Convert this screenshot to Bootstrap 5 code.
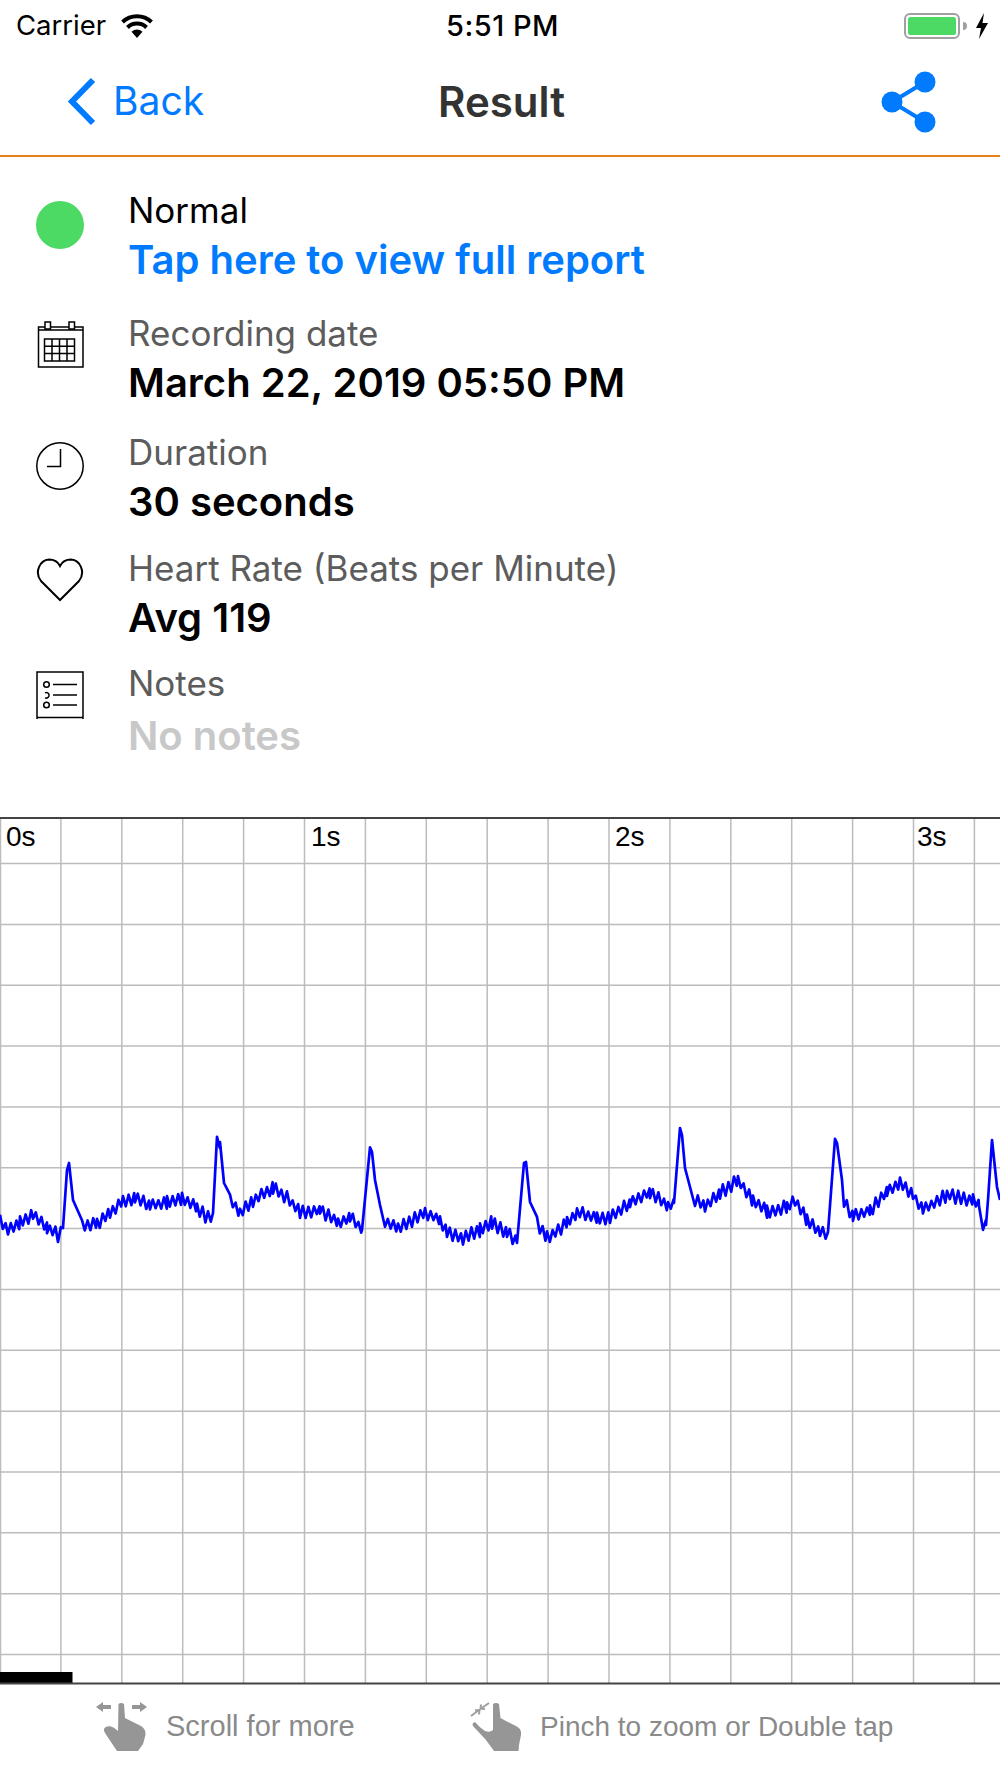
<!DOCTYPE html>
<html lang="en">
<head>
    <meta charset="UTF-8">
    <meta name="viewport" content="width=device-width, initial-scale=1.0">
    <title>Result</title>
    <link rel="stylesheet" href="https://cdn.jsdelivr.net/npm/bootstrap@5.3.0/dist/css/bootstrap.min.css">
    <style>
        body {
            background: #fff;
            font-family: Inter, "Liberation Sans", sans-serif;
            color: #000;
            width: 1000px;
            height: 1778px;
            overflow: hidden;
        }

        /* Status bar */
        .status-bar {
            height: 47px;
            padding: 4px 11px 0 16px;
            font-size: 27.500px;
            font-weight: 500;
        }
        .status-side { width: 300px; }
        .status-carrier { font-weight: 400; margin-right: 5px; }
        .status-time { font-size: 29px; letter-spacing: 0.500px; }

        /* Navigation */
        .nav-bar {
            height: 110px;
            border-bottom: 2px solid #e8811a;
            padding: 1px 64px 0 67px;
        }
        .nav-side { width: 200px; color: #007aff; font-size: 39px; }
        .nav-title { font-size: 42px; font-weight: 600; color: #333; }

        /* Info rows */
        .info-list { padding-top: 28px; }
        .info-row { display: flex; }
        .info-icon {
            width: 128px;
            padding-left: 36px;
            flex-shrink: 0;
        }
        .info-label, .info-value { line-height: 50px; }
        .info-label { font-size: 35px; color: #5c5c5c; }
        .info-value { font-size: 40px; font-weight: 600; }
        .info-primary { color: #000; }
        .info-link { color: #007aff; text-decoration: none; }
        .info-empty { color: #c8c8c8; margin-top: 3px; }
        .row-a { height: 123px; }
        .row-b { height: 119px; }
        .row-c { height: 116px; }
        .row-d { height: 115px; }
        .row-a .info-icon { padding-top: 16px; }
        .row-b .info-icon { padding-top: 11px; }
        .row-c .info-icon { padding-top: 15px; }
        .row-d .info-icon { padding-top: 15px; }
        .row-e .info-icon { padding-top: 13px; }

        .green-dot {
            width: 48px;
            height: 48px;
            border-radius: 50%;
            background: #4cd964;
        }

        /* Chart */
        .ecg-chart { display: block; margin-top: 56px; }
        .ecg-label { font-family: "Liberation Sans", sans-serif; font-size: 28px; fill: #000; }

        /* Footer hints */
        .hint-bar {
            padding: 17px 0 0 96px;
            font-family: "Liberation Sans", sans-serif;
            font-size: 28px;
            color: #8a8a8a;
        }
        .hint-scroll { width: 374px; gap: 19px; }
        .hint-scroll span { font-size: 29px; }
        .hint-pinch { gap: 18px; }
    </style>
</head>
<body>

<!-- Status bar -->
<div class="status-bar d-flex align-items-center justify-content-between">
    <div class="status-side d-flex align-items-center gap-2">
        <span class="status-carrier">Carrier</span>
        <svg width="36" height="24" viewBox="0 0 36 24">
            <path d="M18 24l-5.500-6.200a8 8 0 0 1 11 0z" fill="#000"/>
            <path d="M8.500 13.500a13.500 13.500 0 0 1 19 0M3.500 8a21 21 0 0 1 29 0" fill="none" stroke="#000" stroke-width="4"/>
        </svg>
    </div>
    <div class="status-time">5:51 PM</div>
    <div class="status-side d-flex justify-content-end align-items-center">
        <svg width="85" height="26" viewBox="0 0 85 26">
            <rect x="1" y="1" width="54" height="24" rx="5" fill="#fff" stroke="#a0a0a0" stroke-width="2"/>
            <rect x="4" y="4" width="48" height="18" rx="2.500" fill="#4cd964"/>
            <path d="M59 9a4 4 0 0 1 0 8z" fill="#a0a0a0"/>
            <path d="M80 0L72 15h5l-2 11 9-16h-5.500z" fill="#000"/>
        </svg>
    </div>
</div>

<!-- Nav bar -->
<div class="nav-bar d-flex align-items-center justify-content-between">
    <div class="nav-side d-flex align-items-center gap-3">
        <svg width="30" height="49" viewBox="0 0 30 49">
            <path d="M26 3L5 24.500 26 46" fill="none" stroke="#007aff" stroke-width="6"/>
        </svg>
        <span>Back</span>
    </div>
    <div class="nav-title">Result</div>
    <div class="nav-side d-flex justify-content-end">
        <svg width="55" height="62" viewBox="0 0 55 62">
            <circle cx="44" cy="11" r="10.500" fill="#007aff"/>
            <circle cx="11" cy="31" r="10.500" fill="#007aff"/>
            <circle cx="44" cy="51" r="10.500" fill="#007aff"/>
            <path d="M44 11L11 31l33 20" fill="none" stroke="#007aff" stroke-width="4"/>
        </svg>
    </div>
</div>

<!-- Details -->
<div class="info-list">
    <div class="info-row row-a">
        <div class="info-icon"><div class="green-dot"></div></div>
        <div>
            <div class="info-label info-primary">Normal</div>
            <a href="#" class="info-value info-link d-block">Tap here to view full report</a>
        </div>
    </div>
    <div class="info-row row-b">
        <div class="info-icon">
            <svg width="48" height="50" viewBox="0 0 48 50" fill="none" stroke="#000" stroke-width="1.500">
                <path d="M2.500 12V48H47V8H2.500zM2.500 11H47"/>
                <rect x="9" y="3" width="5.500" height="7" fill="#fff"/>
                <rect x="33" y="3" width="5.500" height="7" fill="#fff"/>
                <rect x="8.500" y="20" width="30" height="22"/>
                <path d="M8.500 27.300H38.500M8.500 34.600H38.500M16 20V42M23.500 20V42M31 20V42"/>
            </svg>
        </div>
        <div>
            <div class="info-label">Recording date</div>
            <div class="info-value">March 22, 2019 05:50 PM</div>
        </div>
    </div>
    <div class="info-row row-c">
        <div class="info-icon">
            <svg width="48" height="48" viewBox="0 0 48 48" fill="none" stroke="#000" stroke-width="1.500">
                <circle cx="24" cy="24" r="23.200"/>
                <path d="M24.500 7V24.500H11"/>
            </svg>
        </div>
        <div>
            <div class="info-label">Duration</div>
            <div class="info-value">30 seconds</div>
        </div>
    </div>
    <div class="info-row row-d">
        <div class="info-icon">
            <svg width="48" height="44" viewBox="0 0 48 44" fill="none" stroke="#000" stroke-width="2">
                <path d="M24 42L5 23C-2 14 4 2 13 1.500 18 1.500 22 4 24 8 26 4 30 1.500 35 1.500 44 2 50 14 43 23z"/>
            </svg>
        </div>
        <div>
            <div class="info-label">Heart Rate (Beats per Minute)</div>
            <div class="info-value">Avg 119</div>
        </div>
    </div>
    <div class="info-row row-e">
        <div class="info-icon">
            <svg width="48" height="48" viewBox="0 0 48 48" fill="none" stroke="#000" stroke-width="1.500">
                <path d="M1 48V1H47V48M1 46.500H47"/>
                <circle cx="10.500" cy="13.500" r="2.800"/>
                <path d="M9 21.800a2.800 2.800 0 1 1 0 5"/>
                <circle cx="10.500" cy="34" r="2.800"/>
                <path d="M17 13.500H41M17 24H41M17 34H41"/>
            </svg>
        </div>
        <div>
            <div class="info-label">Notes</div>
            <div class="info-value info-empty">No notes</div>
        </div>
    </div>
</div>

<!-- ECG strip, page coordinates in the viewBox -->
<svg id="ecg" class="ecg-chart" width="1000" height="868" viewBox="0 817 1000 868">
    <g id="ecgGrid" stroke="#bcbcbc" stroke-width="1.500"></g>
    <rect x="0" y="1672" width="72.500" height="11" fill="#000"/>
    <path d="M0 818H1000M0 1683.500H1000" stroke="#444" stroke-width="2"/>
    <polyline id="ecgTrace" fill="none" stroke="#0000ff" stroke-width="2.700" stroke-linejoin="round"/>
    <text class="ecg-label" x="6" y="846">0s</text>
    <text class="ecg-label" x="311" y="846">1s</text>
    <text class="ecg-label" x="615" y="846">2s</text>
    <text class="ecg-label" x="917" y="846">3s</text>
</svg>

<!-- Hints -->
<div class="hint-bar d-flex align-items-center">
    <div class="hint-scroll d-flex align-items-center">
        <svg width="51" height="50" viewBox="0 0 51 50" fill="#969696">
            <path d="M0 5L7 0v3h8v4H7v3zM51 5L44 0v3h-8v4h8v3z"/>
            <path d="M22.500 2Q25 0 28 2L29 16 35 19 45 24Q50 27 49.500 33L47 42 42 49H21L15 40 9 31Q6 26 11 24.500 16 23 22 29z"/>
        </svg>
        <span>Scroll for more</span>
    </div>
    <div class="hint-pinch d-flex align-items-center">
        <svg width="52" height="50" viewBox="0 0 52 50" fill="#969696">
            <path d="M1 14L9 8M5 8.500L9.500 8 9 12.500M19 1L11 6.500M11 2.500L10.500 6.500 15 7" fill="none" stroke="#a0a0a0" stroke-width="2"/>
            <path d="M23 2Q26 0 29 2L30.500 16 36 19 46 24Q52 27 51 33L49 43 48.500 49H24L16 38 3 24Q1.500 21 5 20 9 25 15 29 20 31 23 28z"/>
        </svg>
        <span>Pinch to zoom or Double tap</span>
    </div>
</div>

<script>
    // grid lines, about one cell every 61px
    const grid = document.getElementById('ecgGrid');
    let gridLines = '<path d="M0.500 817V1683"/>';
    for (let i = 1; i <= 16; i++) {
        const x = (i * 60.9).toFixed(1);
        gridLines += `<path d="M${x} 817V1683"/>`;
    }
    for (let i = 0; i < 14; i++) {
        const y = (863.5 + i * 60.85).toFixed(1);
        gridLines += `<path d="M0 ${y}H1000"/>`;
    }
    grid.innerHTML = gridLines;

    // rough outline of the trace, the ripple gets added below
    const outline = [
        [0,1220],[8,1230],[20,1222],[33,1215],[47,1228],[58,1235],[63,1228],[67,1165],[69,1163],[73,1200],[82,1227],
        [97,1223],[110,1213],[123,1200],[135,1198],[150,1205],[167,1203],[182,1198],[197,1208],[208,1218],[213,1213],
        [217,1143],[220,1142],[224,1183],[230,1200],[240,1213],[253,1200],[273,1187],[287,1198],[300,1212],[320,1210],[338,1223],
        [350,1217],[362,1230],[370,1153],[372,1152],[375,1180],[380,1205],[385,1223],[398,1227],[412,1220],[425,1212],[440,1220],
        [447,1232],[463,1238],[480,1230],[492,1222],[507,1233],[517,1243],[524,1158],[526,1162],[530,1202],[537,1223],[547,1238],
        [567,1223],[577,1213],[597,1217],[610,1218],[630,1203],[650,1192],[668,1207],[674,1203],[680,1128],[682,1135],[685,1168],
        [690,1187],[695,1200],[705,1207],[720,1193],[738,1180],[753,1200],[767,1212],[787,1207],[795,1200],[807,1220],
        [820,1232],[828,1232],[835,1145],[837,1143],[842,1180],[844,1200],[853,1217],[870,1210],[887,1192],[900,1183],[913,1195],
        [923,1210],[947,1195],[973,1200],[979,1206],[983,1225],[986,1225],[988,1200],[992,1140],[997,1187],[1000,1200]
    ];

    let seed = 7;
    function rnd() {
        seed = (seed * 9301 + 49297) % 233280;
        return seed / 233280;
    }

    const pts = [];
    let up = false;
    for (let i = 0; i < outline.length - 1; i++) {
        const [x0, y0] = outline[i];
        const [x1, y1] = outline[i + 1];
        const slope = Math.abs((y1 - y0) / (x1 - x0));
        if (slope > 2.5) {
            pts.push([x0, y0]);
            continue;
        }
        for (let x = x0; x < x1; x += 2.8) {
            const base = y0 + (y1 - y0) * (x - x0) / (x1 - x0);
            up = !up;
            const amp = 3.5 + rnd() * 3.5;
            pts.push([x, base + (up ? -amp : amp)]);
        }
    }
    pts.push(outline[outline.length - 1]);
    document.getElementById('ecgTrace').setAttribute('points', pts.map(p => p[0] + ',' + p[1].toFixed(1)).join(' '));
</script>

<script src="https://cdn.jsdelivr.net/npm/bootstrap@5.3.0/dist/js/bootstrap.bundle.min.js"></script>
</body>
</html>
